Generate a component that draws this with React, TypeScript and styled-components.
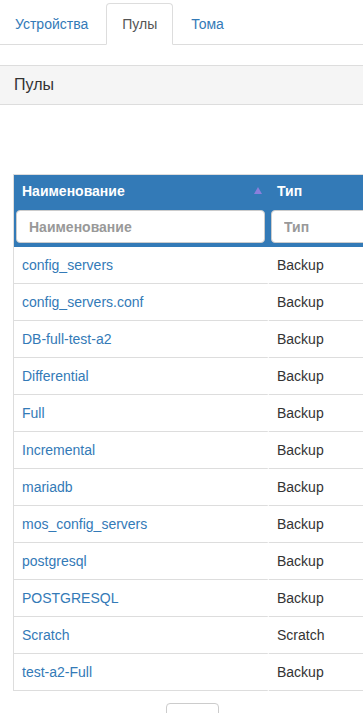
import React from "react";
import styled, { createGlobalStyle } from "styled-components";

const GlobalStyle = createGlobalStyle`
  html, body {
    margin: 0;
    padding: 0;
    overflow: hidden;
    background: #fff;
  }
  body {
    font-family: "Liberation Sans", Arial, sans-serif;
    font-size: 14px;
    line-height: 20px;
    color: #333;
  }
`;

const Page = styled.div`
  width: 363px;
  padding-top: 3px;
`;

const Tabs = styled.ul`
  display: flex;
  list-style: none;
  margin: 0;
  padding: 0;
  border-bottom: 1px solid #ddd;
`;

const Tab = styled.li<{ $active?: boolean }>`
  margin: 0 2px ${(p) => (p.$active ? "-1px" : "0")} 0;
  padding: 10px 15px;
  border: 1px solid ${(p) => (p.$active ? "#ddd" : "transparent")};
  border-bottom: ${(p) => (p.$active ? "1px solid #fff" : "none")};
  border-radius: 4px 4px 0 0;
  background: ${(p) => (p.$active ? "#fff" : "transparent")};
  color: ${(p) => (p.$active ? "#555" : "#337ab7")};
  &:first-child {
    margin-left: -1px;
  }
`;

const Panel = styled.div`
  margin: 20px -1px 0 -1px;
`;

const PanelHeading = styled.div`
  padding: 9px 15px 10px;
  background: #f5f5f5;
  border-top: 1px solid #ddd;
  border-bottom: 1px solid #ddd;
  font-size: 16px;
  line-height: 19px;
  color: #333;
`;

const PanelBody = styled.div`
  padding: 69px 0 0 14px;
`;

const Table = styled.table`
  border-collapse: separate;
  border-spacing: 0;
  width: 480px;
  border-left: 1px solid #ddd;
  border-top: 1px solid #ddd;
`;

const HeadCell = styled.th<{ $w?: number }>`
  background: #337ab7;
  color: #fff;
  font-weight: bold;
  text-align: left;
  padding: 6px 8px 7px;
  position: relative;
  width: ${(p) => (p.$w ? `${p.$w}px` : "auto")};
`;

const FilterCell = styled.th`
  background: #337ab7;
  padding: 2px 4px 4px 2px;
`;

const FilterInput = styled.input`
  box-sizing: border-box;
  width: 100%;
  height: 33px;
  padding: 6px 12px;
  border: 1px solid #ccc;
  border-radius: 4px;
  background: #fff;
  font-family: "Liberation Sans", Arial, sans-serif;
  font-size: 14px;
  font-weight: bold;
  color: #555;
  &::placeholder {
    color: #999;
  }
`;

const SortArrow = styled.span`
  position: absolute;
  right: 7px;
  top: 12px;
  width: 0;
  height: 0;
  border-left: 4px solid transparent;
  border-right: 4px solid transparent;
  border-bottom: 7px solid #8a7fdc;
`;

const Cell = styled.td`
  padding: 8px;
  height: 20px;
  border-bottom: 1px solid #ddd;
  &:first-child {
    border-right: 2px solid #fff;
  }
`;

const NameLink = styled.a`
  color: #337ab7;
  text-decoration: none;
`;

const Footer = styled.div`
  display: flex;
  align-items: center;
  padding: 12px 0 0 1px;
  color: #333;
`;

const FooterLabel = styled.span`
  width: 152px;
  white-space: nowrap;
  padding-top: 1px;
`;

const PageSize = styled.div`
  width: 53px;
  height: 32px;
  margin-right: 6px;
  border: 1px solid #ccc;
  border-radius: 4px;
  box-sizing: border-box;
`;

const Unit = styled.span`
  padding-top: 1px;
`;

const pools = [
  ["config_servers", "Backup"],
  ["config_servers.conf", "Backup"],
  ["DB-full-test-a2", "Backup"],
  ["Differential", "Backup"],
  ["Full", "Backup"],
  ["Incremental", "Backup"],
  ["mariadb", "Backup"],
  ["mos_config_servers", "Backup"],
  ["postgresql", "Backup"],
  ["POSTGRESQL", "Backup"],
  ["Scratch", "Scratch"],
  ["test-a2-Full", "Backup"],
];

export default function App() {
  return (
    <Page>
      <GlobalStyle />
      <Tabs>
        <Tab>Устройства</Tab>
        <Tab $active>Пулы</Tab>
        <Tab>Тома</Tab>
      </Tabs>
      <Panel>
        <PanelHeading>Пулы</PanelHeading>
        <PanelBody>
          <Table>
            <thead>
              <tr>
                <HeadCell $w={239}>
                  Наименование
                  <SortArrow />
                </HeadCell>
                <HeadCell>Тип</HeadCell>
              </tr>
              <tr>
                <FilterCell>
                  <FilterInput placeholder="Наименование" />
                </FilterCell>
                <FilterCell>
                  <FilterInput placeholder="Тип" />
                </FilterCell>
              </tr>
            </thead>
            <tbody>
              {pools.map(([name, type]) => (
                <tr key={name}>
                  <Cell>
                    <NameLink href="#">{name}</NameLink>
                  </Cell>
                  <Cell>{type}</Cell>
                </tr>
              ))}
            </tbody>
          </Table>
          <Footer>
            <FooterLabel>Отображать записей по</FooterLabel>
            <PageSize />
            <Unit>записей</Unit>
          </Footer>
        </PanelBody>
      </Panel>
    </Page>
  );
}
